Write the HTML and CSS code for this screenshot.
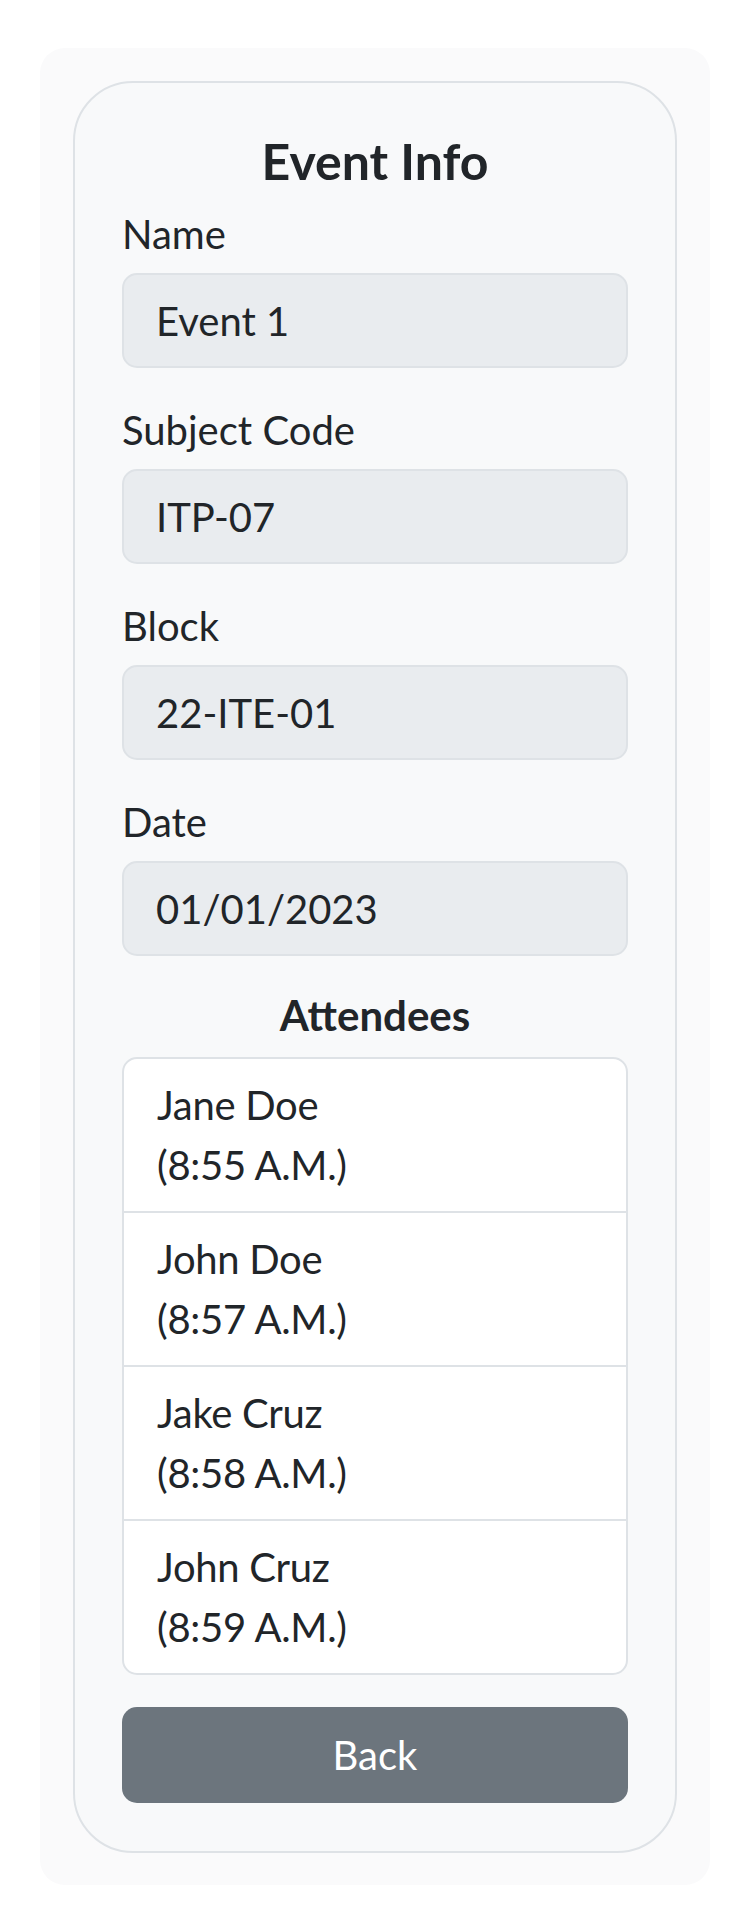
FILE: index.html
```html
<!DOCTYPE html>
<html lang="en">
<head>
<meta charset="utf-8">
<title>Event Info</title>
<link rel="stylesheet" href="styles.css">
</head>
<body>
<div class="page">
  <div class="outer">
    <div class="card">
      <h1 class="title">Event Info</h1>
      <div class="field">
        <div class="label">Name</div>
        <div class="input">Event 1</div>
      </div>
      <div class="field">
        <div class="label">Subject Code</div>
        <div class="input">ITP-07</div>
      </div>
      <div class="field">
        <div class="label">Block</div>
        <div class="input">22-ITE-01</div>
      </div>
      <div class="field">
        <div class="label">Date</div>
        <div class="input">01/01/2023</div>
      </div>
      <h2 class="subtitle">Attendees</h2>
      <ul class="list">
        <li class="item"><div>Jane Doe</div><div>(8:55 A.M.)</div></li>
        <li class="item"><div>John Doe</div><div>(8:57 A.M.)</div></li>
        <li class="item"><div>Jake Cruz</div><div>(8:58 A.M.)</div></li>
        <li class="item"><div>John Cruz</div><div>(8:59 A.M.)</div></li>
      </ul>
      <button class="btn" type="button">Back</button>
    </div>
  </div>
</div>
</body>
</html>
```

FILE: styles.css
```css
* { box-sizing: border-box; }

body {
  margin: 0;
  background: #ffffff;
  color: #212529;
  font-family: Lato, "Open Sans", sans-serif;
  font-size: 40px;
  line-height: 60px;
}

.page {
  padding: 48px 40px 49px;
}

.outer {
  background: #fafafb;
  border-radius: 25px;
  padding: 33px 33px 32px;
}

.card {
  background: #f8f9fa;
  border: 2px solid #dee2e6;
  border-radius: 60px;
  padding: 48px 47px 48px;
}

.title {
  margin: 0 0 13px;
  font-size: 50px;
  line-height: 60px;
  font-weight: 700;
  text-align: center;
}

.field {
  margin-bottom: 32px;
}

.label {
  margin-bottom: 9px;
}

.input {
  height: 95px;
  background: #e9ecef;
  border: 2px solid #dee2e6;
  border-radius: 15px;
  padding: 16px 32px 15px;
}

.subtitle {
  margin: -3px 0 12px;
  font-size: 42px;
  line-height: 60px;
  font-weight: 700;
  text-align: center;
}

.list {
  list-style: none;
  margin: 0 0 32px;
  padding: 0;
  background: #ffffff;
  border: 2px solid #dee2e6;
  border-radius: 15px;
  overflow: hidden;
}

.item {
  padding: 16px 33px 16px;
  letter-spacing: -0.3px;
}

.item + .item {
  border-top: 2px solid #dee2e6;
}

.btn {
  display: block;
  width: 100%;
  height: 96px;
  border: 0;
  border-radius: 15px;
  background: #6c757d;
  color: #ffffff;
  font-family: inherit;
  font-size: 40px;
  line-height: 60px;
  padding: 18px 0;
  cursor: pointer;
}
```
